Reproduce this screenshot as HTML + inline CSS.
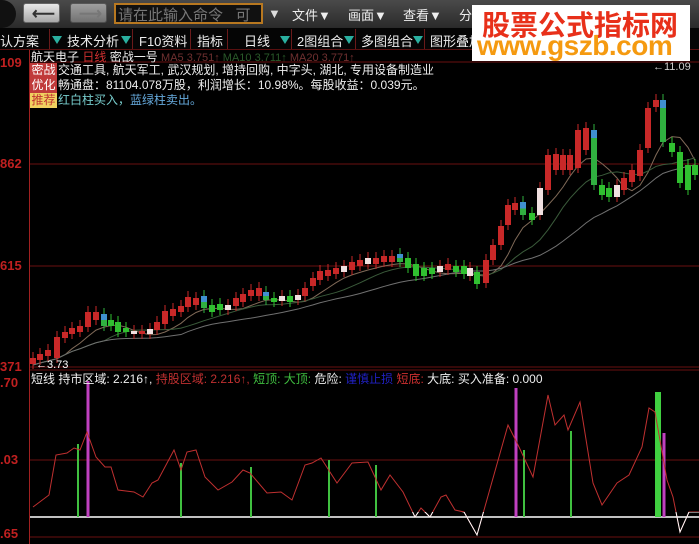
<!DOCTYPE html>
<html><head><meta charset="utf-8">
<style>
*{margin:0;padding:0;box-sizing:border-box}
body{width:699px;height:544px;background:#000;overflow:hidden;position:relative;font-family:"Liberation Sans","Noto Sans CJK SC",sans-serif;color:#ddd}
.a{position:absolute;white-space:nowrap}
#top{left:0;top:0;width:699px;height:28px;background:linear-gradient(#4a4a4a,#2a2a2a)}
.btn{top:3px;height:20px;width:37px;border-radius:3px;background:linear-gradient(#e8e8e8,#a8a8a8);border:1px solid #666}
#bar2{left:0;top:28px;width:699px;height:22px;background:#050505;border-bottom:1px solid #5a1010}
.t2{top:31px;font-size:13px;color:#eee}
.sep{top:29px;width:1px;height:20px;background:#6a1a1a}
.tri{top:36px;width:0;height:0;border-left:5px solid transparent;border-right:5px solid transparent;border-top:8px solid #2ab0a0}
.ax{font-size:13px;color:#c02020;font-weight:bold;left:0}
</style></head><body>
<div id="top" class="a"></div>
<div class="a" style="left:0;top:0;width:16px;height:28px;background:#111;border-radius:0 14px 14px 0"></div>
<div class="a btn" style="left:23px"></div>
<div class="a" style="left:32px;top:4px;font-size:16px;color:#333;font-weight:bold">⟵</div>
<div class="a btn" style="left:70px;opacity:.55"></div>
<div class="a" style="left:79px;top:4px;font-size:16px;color:#777;font-weight:bold">⟶</div>
<div class="a" style="left:114px;top:3px;width:149px;height:21px;border:2px solid #b87820;background:#111"></div>
<div class="a" style="left:118px;top:4px;font-size:15px;color:#777">请在此输入命令&nbsp;&nbsp;&nbsp;可</div>
<div class="a" style="left:268px;top:6px;font-size:13px;color:#ddd">▼</div>
<div class="a" style="left:292px;top:5px;font-size:13px;color:#eee">文件▼</div>
<div class="a" style="left:348px;top:5px;font-size:13px;color:#eee">画面▼</div>
<div class="a" style="left:403px;top:5px;font-size:13px;color:#eee">查看▼</div>
<div class="a" style="left:459px;top:5px;font-size:13px;color:#eee">分</div>

<div id="bar2" class="a"></div>
<div class="a t2" style="left:0">认方案</div><div class="a tri" style="left:52px"></div><div class="a sep" style="left:49px"></div>
<div class="a t2" style="left:67px">技术分析</div><div class="a tri" style="left:121px"></div><div class="a sep" style="left:132px"></div>
<div class="a t2" style="left:139px">F10资料</div><div class="a sep" style="left:190px"></div>
<div class="a t2" style="left:197px">指标</div><div class="a sep" style="left:227px"></div>
<div class="a t2" style="left:244px">日线</div><div class="a tri" style="left:280px"></div><div class="a sep" style="left:291px"></div>
<div class="a t2" style="left:297px">2图组合</div><div class="a tri" style="left:344px"></div><div class="a sep" style="left:355px"></div>
<div class="a t2" style="left:361px">多图组合</div><div class="a tri" style="left:413px"></div><div class="a sep" style="left:424px"></div>
<div class="a t2" style="left:430px">图形叠加</div>

<div class="a" style="left:472px;top:5px;width:218px;height:56px;background:#fff"></div>
<div class="a" style="left:482px;top:4px;font-size:28px;font-weight:bold;color:#e8301a;letter-spacing:0px">股票公式指标网</div>
<div class="a" style="left:477px;top:30px;font-size:28px;font-weight:bold;color:#f59a10;letter-spacing:-0.5px">www.gszb.com</div>

<svg class="a" style="left:0;top:0" width="699" height="544" id="s">
<g stroke="#6a1010" stroke-width="1">
<line x1="29" y1="62" x2="699" y2="62"/><line x1="29" y1="164" x2="699" y2="164"/>
<line x1="29" y1="266" x2="699" y2="266"/><line x1="29" y1="367" x2="699" y2="367"/>
<line x1="29" y1="370" x2="699" y2="370"/><line x1="29" y1="460" x2="699" y2="460"/>
<line x1="29" y1="537" x2="699" y2="537"/>
</g>
<line x1="29.5" y1="50" x2="29.5" y2="544" stroke="#a02020"/>
<line x1="30" y1="517" x2="699" y2="517" stroke="#fff" stroke-width="1.5"/>
<g id="bars"></g>
<polyline id="ind" fill="none" stroke="#c03030" stroke-width="1"/>
<clipPath id="cl"><rect x="0" y="512" width="699" height="40"/></clipPath>
<polyline id="ind2" fill="none" stroke="#fff" stroke-width="1" clip-path="url(#cl)"/>
<g id="ma"></g>
<g id="cd"></g>
</svg>

<div class="a ax" style="top:55px">109</div>
<div class="a ax" style="top:156px">862</div>
<div class="a ax" style="top:258px">615</div>
<div class="a ax" style="top:359px">371</div>
<div class="a ax" style="top:375px">.70</div>
<div class="a ax" style="top:452px">.03</div>
<div class="a ax" style="top:526px">.65</div>

<div class="a" style="left:31px;top:48px;font-size:12px;color:#eee">航天电子 <span style="color:#d03030">日线</span> 密战一号 <span style="color:#703030;font-size:11px">MA5 3.751↑ <span style="color:#2a5a2a">MA10 3.711↑</span> MA20 3.771↑</span></div>
<div class="a" style="left:30px;top:63px;width:27px;height:30px;background:#c03a3a;color:#fff;font-size:12px;line-height:15px;text-align:center">密战<br>优化</div>
<div class="a" style="left:30px;top:93px;width:27px;height:15px;background:#f0d060;color:#c03030;font-size:12px;line-height:15px;text-align:center">推荐</div>
<div class="a" style="left:58px;top:61px;font-size:12px;color:#eee">交通工具, 航天军工, 武汉规划, 增持回购, 中字头, 湖北, 专用设备制造业</div>
<div class="a" style="left:58px;top:76px;font-size:12px;color:#eee">畅通盘：81104.078万股，利润增长：10.98%。每股收益：0.039元。</div>
<div class="a" style="left:58px;top:91px;font-size:12px;color:#6ad"><span style="color:#7cc">红白柱买入，</span>蓝绿柱卖出。</div>
<div class="a" style="left:36px;top:359px;font-size:11px;color:#fff">←3.73</div>
<div class="a" style="left:653px;top:61px;font-size:11px;color:#ccc">←11.09</div>
<div class="a" style="left:31px;top:370px;font-size:12px;color:#eee">短线 持市区域: 2.216↑, <span style="color:#c03030">持股区域: 2.216↑,</span> <span style="color:#40c040">短顶: 大顶:</span> 危险: <span style="color:#2020c0">谨慎止损</span> <span style="color:#d03030">短底:</span> 大底: 买入准备: 0.000</div>

<script>
var NS="http://www.w3.org/2000/svg",s=document.getElementById('s');
function el(p,t,a){var e=document.createElementNS(NS,t);for(var k in a)e.setAttribute(k,a[k]);p.appendChild(e);return e;}
var pts="33,507 49,495 56,455 67,453 74,448 80,450 87,432 96,457 105,467 111,467 118,490 134,492 143,497 152,483 158,480 174,450 181,470 187,452 196,450 205,477 218,490 232,482 243,470 250,473 267,493 281,492 292,500 305,465 312,463 321,458 337,483 352,463 368,462 381,490 390,475 403,492 415,517 421,508 430,517 441,497 446,495 455,510 464,512 477,535 486,503 508,425 519,447 533,477 548,395 555,425 564,415 568,430 580,402 593,483 602,505 617,483 629,475 642,447 649,408 655,412 667,480 673,497 680,532 689,512 699,512";
document.getElementById('ind').setAttribute('points',pts);
document.getElementById('ind2').setAttribute('points',pts);
var b=document.getElementById('bars');
[[78,444,2,'#40c040'],[181,463,2,'#40c040'],[251,467,2,'#40c040'],[329,460,2,'#40c040'],[376,465,2,'#40c040'],[524,450,2,'#40c040'],[571,431,2,'#40c040'],[658,392,6,'#40d040'],[88,381,3,'#c040c0'],[516,388,3,'#c040c0'],[664,433,3,'#c040c0']].forEach(function(v){el(b,'rect',{x:v[0]-v[2]/2,y:v[1],width:v[2],height:517-v[1],fill:v[3]});});
var C=[[33,358,364,'r'],[40,354,360,'r'],[48,350,356,'r'],[57,337,358,'r'],[65,332,338,'r'],[72,328,334,'r'],[80,326,332,'r'],[88,312,327,'r'],[96,312,320,'r'],[104,314,326,'b'],[111,320,326,'g'],[118,322,332,'g'],[126,328,332,'g'],[134,331,334,'w'],[142,331,334,'r'],[150,329,334,'w'],[157,322,330,'r'],[165,311,324,'r'],[173,309,316,'r'],[181,306,312,'r'],[188,297,307,'r'],[196,298,305,'r'],[204,296,308,'b'],[212,305,312,'g'],[220,304,310,'g'],[228,305,310,'w'],[236,298,306,'r'],[243,294,302,'r'],[251,290,296,'r'],[259,288,296,'r'],[266,292,300,'b'],[274,298,302,'g'],[282,296,301,'w'],[290,296,302,'g'],[298,295,300,'w'],[305,288,296,'r'],[313,278,286,'r'],[320,271,280,'r'],[328,270,276,'r'],[336,268,274,'r'],[344,266,272,'w'],[352,262,270,'r'],[360,260,266,'r'],[368,258,264,'w'],[376,258,264,'r'],[384,256,262,'r'],[392,256,262,'r'],[400,254,262,'b'],[408,258,268,'g'],[416,264,276,'g'],[424,268,276,'g'],[432,268,274,'g'],[440,266,272,'w'],[448,264,270,'r'],[456,266,272,'g'],[464,266,274,'g'],[470,268,276,'w'],[477,272,284,'g'],[486,260,283,'r'],[493,245,260,'r'],[501,226,245,'r'],[508,205,225,'r'],[515,203,210,'r'],[523,202,215,'b'],[532,213,220,'g'],[540,188,215,'w'],[548,155,190,'r'],[556,154,170,'r'],[563,155,170,'r'],[570,155,170,'r'],[578,130,168,'r'],[586,128,150,'r'],[594,130,185,'b'],[602,185,195,'g'],[609,188,197,'g'],[617,185,197,'w'],[624,178,190,'r'],[632,170,182,'r'],[640,150,176,'r'],[648,108,148,'r'],[656,100,107,'r'],[663,100,142,'b'],[672,143,152,'g'],[680,152,183,'g'],[688,165,190,'g'],[695,165,175,'g']];
var cd=document.getElementById('cd');
C.forEach(function(c){var col={r:'#c82828',g:'#30c030',w:'#f0e0e0',b:'#30b040'}[c[3]];
el(cd,'line',{x1:c[0],x2:c[0],y1:c[1]-6,y2:c[2]+5,stroke:col=='#f0e0e0'?'#c82828':col,'stroke-width':1});
el(cd,'rect',{x:c[0]-3,y:c[1],width:6,height:Math.max(2,c[2]-c[1]),fill:col});
if(c[3]=='b')el(cd,'rect',{x:c[0]-3,y:c[1],width:6,height:Math.min(8,(c[2]-c[1])/2),fill:'#4090d0'});});
var ma=document.getElementById('ma');
function ml(off,col){var p=[];C.forEach(function(c,i){var j=Math.max(0,i-off),sum=0,n=0;for(var k=j;k<=i;k++){sum+=(C[k][1]+C[k][2])/2;n++;}p.push(c[0]+','+(sum/n+4));});el(ma,'polyline',{points:p.join(' '),fill:'none',stroke:col,'stroke-width':1});}
ml(4,'#806a58');ml(9,'#3a5a3a');ml(19,'#707070');
</script>
</body></html>
